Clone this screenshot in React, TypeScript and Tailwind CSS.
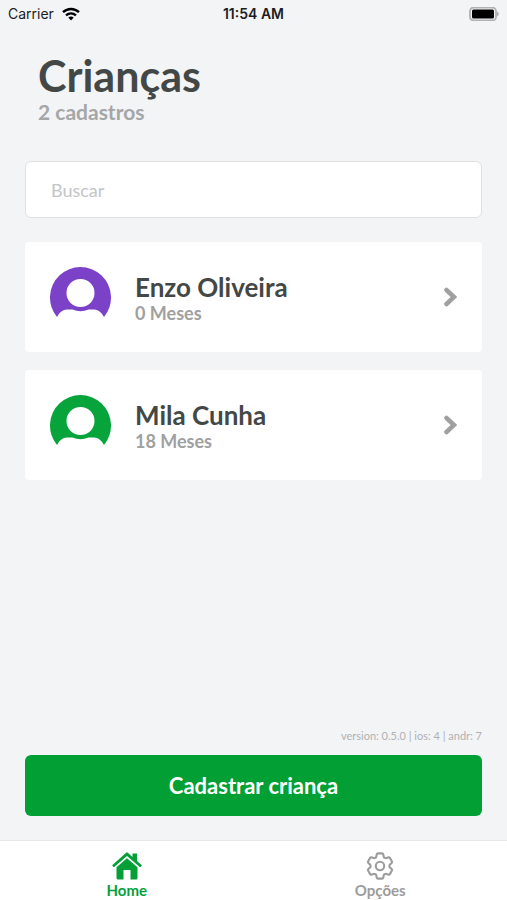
import { useState } from 'react'
import { HiOutlineCog6Tooth } from 'react-icons/hi2'

type Child = {
  name: string
  age: string
  color: string
}

const children: Child[] = [
  { name: 'Enzo Oliveira', age: '0 Meses', color: 'text-[#7b42c8]' },
  { name: 'Mila Cunha', age: '18 Meses', color: 'text-[#06a43a]' },
]

function StatusBar() {
  return (
    <div className="grid h-7 grid-cols-3 items-center px-2 font-[Inter,sans-serif] text-sm text-[#1c1c1e]">
      <div className="flex items-center gap-2">
        <span>Carrier</span>
        <svg viewBox="0 0 18 14" className="h-3.5 w-[18px]" fill="none" stroke="#000" strokeWidth="2.4">
          <path d="M1 5.2C5.6.9 12.4.9 17 5.2" />
          <path d="M4 8.4c3-2.7 7-2.7 10 0" />
          <path d="M6.3 10.5c1.7-1.4 3.7-1.4 5.4 0L9 13.4z" fill="#000" stroke="none" />
        </svg>
      </div>
      <span className="text-center font-semibold">11:54 AM</span>
      <svg viewBox="0 0 30 14" className="h-3.5 w-[30px] justify-self-end">
        <rect x="1" y="0.5" width="26" height="13" rx="3.5" fill="#f3f4f6" stroke="#b0b1b3" strokeWidth="1.8" />
        <rect x="3" y="2.5" width="22" height="9" rx="1.5" fill="#000" />
        <path d="M28 4.6c2.4 1 2.4 3.8 0 4.8z" fill="#b0b1b3" />
      </svg>
    </div>
  )
}

function Avatar({ color }: { color: string }) {
  return (
    <svg viewBox="0 0 61 61" className={`size-[61px] shrink-0 ${color}`} fill="currentColor">
      <path
        fillRule="evenodd"
        d="M7 50A30.5 30.5 0 1 1 54 50C52 46 49 42.800 44 42.400H38.500Q34.500 44.200 30.500 44.200T22.500 42.400H17C12 42.800 9 46 7 50ZM30.500 12a14 14 0 1 0 0 28a14 14 0 1 0 0-28Z"
      />
    </svg>
  )
}

function ChildCard({ child }: { child: Child }) {
  return (
    <li>
      <a href="#" className="flex h-[110px] items-center gap-6 rounded bg-white px-[25px]">
        <Avatar color={child.color} />
        <div className="flex-1 pt-1">
          <h2 className="text-[26px] leading-7 font-bold text-[#434847]">{child.name}</h2>
          <p className="text-lg leading-6 font-bold text-[#a0a0a0]">{child.age}</p>
        </div>
        <svg viewBox="0 0 16 20" className="h-5 w-4" fill="none" stroke="#a0a0a0" strokeWidth="4.5">
          <path d="M5.5 3 13 10 5.5 17" strokeLinecap="round" />
        </svg>
      </a>
    </li>
  )
}

function HomeIcon() {
  return (
    <svg viewBox="0 0 30 28" className="h-7 w-[30px]" fill="#059f38">
      <path d="M14.2.7a1.2 1.2 0 0 1 1.6 0l4.700 4.200V1.500h4.500v7.400l4.300 3.900a1 1 0 0 1 .1 1.300l-.5.600a1 1 0 0 1-1.400.1L15 3.900 2.500 14.800a1 1 0 0 1-1.400-.1l-.5-.6a1 1 0 0 1 .1-1.300Z" />
      <path d="M15 6.200 25.500 15.300V26a1.500 1.500 0 0 1-1.500 1.500h-5.500V18h-7v9.500H6A1.500 1.500 0 0 1 4.500 26V15.300Z" />
    </svg>
  )
}

export default function App() {
  const [search, setSearch] = useState('')

  return (
    <div className="flex min-h-screen flex-col bg-[#f3f4f6] font-[Lato,sans-serif]">
      <StatusBar />

      <main className="flex flex-1 flex-col px-[25px] pt-6 pb-6">
        <header className="px-[13px]">
          <h1 className="text-[43px] leading-12 font-bold text-[#434847]">Crianças</h1>
          <p className="text-[21px] leading-6 font-bold text-[#a5a6a7]">2 cadastros</p>
        </header>

        <input
          type="search"
          aria-label="Buscar"
          placeholder="Buscar"
          value={search}
          onChange={(e) => setSearch(e.target.value)}
          className="mt-[37px] h-[57px] w-full rounded-md border border-[#dfe1e2] bg-white px-[25px] text-lg text-[#434847] outline-none placeholder:text-[#c4c5c6]"
        />

        <ul className="mt-6 flex flex-col gap-[18px]">
          {children.map((child) => (
            <ChildCard key={child.name} child={child} />
          ))}
        </ul>

        <p className="mt-auto text-right text-[11px] leading-4 text-[#b0b1b2]">version: 0.5.0 | ios: 4 | andr: 7</p>
        <button
          type="button"
          className="mt-[11px] h-[61px] w-full rounded-md bg-[#029f35] text-[22px] font-bold text-white"
        >
          Cadastrar criança
        </button>
      </main>

      <nav className="grid h-[60px] grid-cols-2 border-t border-[#e6e7e8] bg-white text-[15px] leading-5 font-bold">
        <a href="#" className="flex flex-col items-center pt-[11px] text-[#059f38]">
          <HomeIcon />
          Home
        </a>
        <a href="#" className="flex flex-col items-center pt-[11px] text-[#9c9c9c]">
          <HiOutlineCog6Tooth viewBox="2 2 20 20" className="size-7" />
          Opções
        </a>
      </nav>
    </div>
  )
}
